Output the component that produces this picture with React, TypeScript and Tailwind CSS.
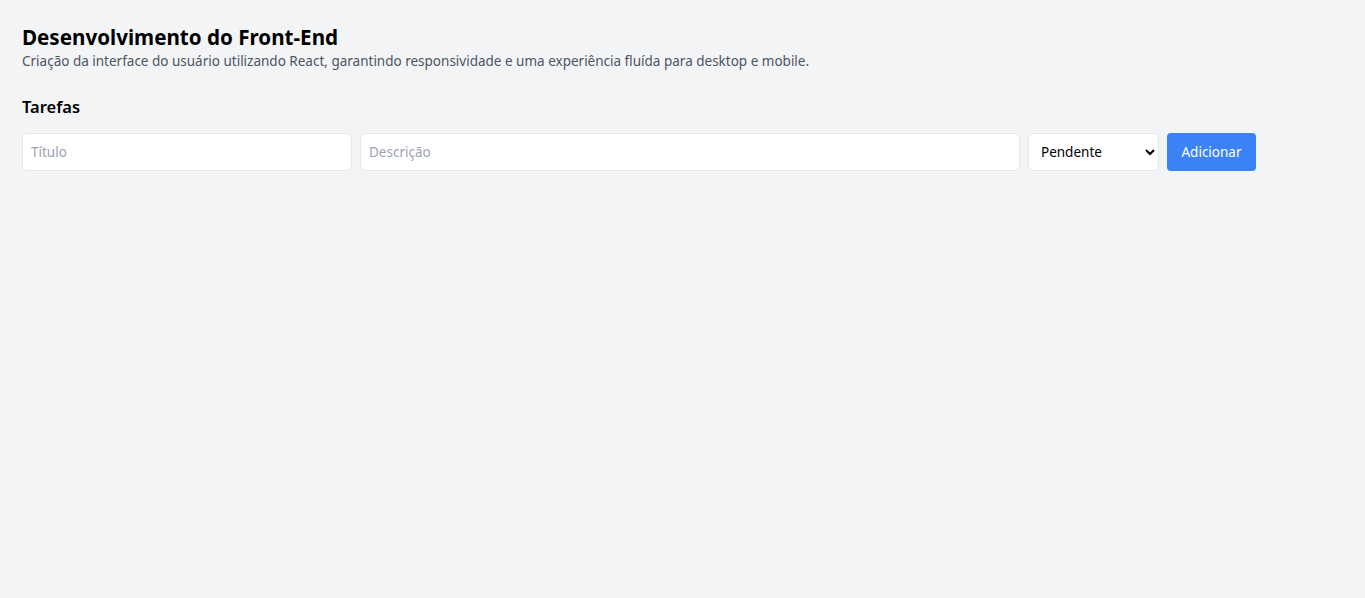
import { useState } from 'react';

export default function App() {
  const [title, setTitle] = useState('');
  const [description, setDescription] = useState('');
  const [status, setStatus] = useState('pendente');

  return (
    <div className="min-h-screen bg-[#f3f4f6] font-['Noto_Sans',sans-serif]">
      <div className="px-[22px] pt-[23px]">
        <h1 className="text-[20.6px] font-bold leading-7 text-black">Desenvolvimento do Front-End</h1>
        <p className="text-[13.5px] leading-5 text-[#4b5563]">
          Criação da interface do usuário utilizando React, garantindo responsividade e uma experiência fluída para desktop e mobile.
        </p>

        <h2 className="mt-[22px] text-[16.5px] font-semibold leading-7 text-black">Tarefas</h2>

        <form
          className="mt-3 flex w-[1234px] gap-2"
          onSubmit={(e) => e.preventDefault()}
        >
          <input
            value={title}
            onChange={(e) => setTitle(e.target.value)}
            placeholder="Título"
            className="h-[38px] w-[330px] rounded border border-[#e5e7eb] bg-white px-2 text-[13.5px] placeholder:text-[#9ca3af] focus:outline-none"
          />
          <input
            value={description}
            onChange={(e) => setDescription(e.target.value)}
            placeholder="Descrição"
            className="h-[38px] min-w-0 flex-1 rounded border border-[#e5e7eb] bg-white px-2 text-[13.5px] placeholder:text-[#9ca3af] focus:outline-none"
          />
          <select
            value={status}
            onChange={(e) => setStatus(e.target.value)}
            className="h-[38px] w-[131px] rounded border border-[#e5e7eb] bg-white px-2 text-[13.5px] text-black"
          >
            <option value="pendente">Pendente</option>
            <option value="andamento">Em andamento</option>
            <option value="concluida">Concluída</option>
          </select>
          <button
            type="submit"
            className="h-[38px] w-[89px] rounded bg-[#3b82f6] text-[13.5px] text-white hover:bg-[#2563eb]"
          >
            Adicionar
          </button>
        </form>
      </div>
    </div>
  );
}
